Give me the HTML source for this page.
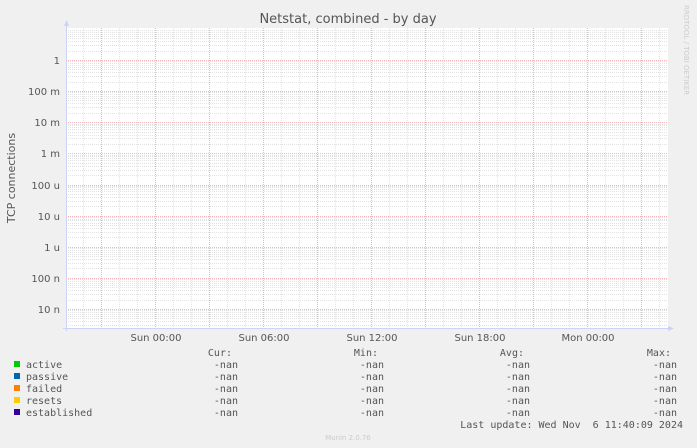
<!DOCTYPE html>
<html><head><meta charset="utf-8"><style>
html,body{margin:0;padding:0;background:#f0f0f0;}
body{width:697px;height:448px;overflow:hidden;position:relative;}
svg{position:absolute;left:0;top:0;}
</style></head><body>
<svg width="697" height="448" xmlns="http://www.w3.org/2000/svg" shape-rendering="crispEdges">
<rect x="66" y="28" width="602" height="300" fill="#fff"/>
<g stroke="#e2e2e2" stroke-dasharray="1,1" fill="none">
<path d="M66 30.5H668M66 32.5H668M66 34.5H668M66 36.5H668M66 38.5H668M66 41.5H668M66 45.5H668M66 51.5H668
M66 61.5H668M66 63.5H668M66 65.5H668M66 67.5H668M66 69.5H668M66 72.5H668M66 76.5H668M66 82.5H668
M66 92.5H668M66 94.5H668M66 96.5H668M66 98.5H668M66 100.5H668M66 103.5H668M66 107.5H668M66 113.5H668
M66 124.5H668M66 125.5H668M66 127.5H668M66 129.5H668M66 132.5H668M66 135.5H668M66 138.5H668M66 144.5H668
M66 155.5H668M66 156.5H668M66 158.5H668M66 160.5H668M66 163.5H668M66 166.5H668M66 170.5H668M66 175.5H668
M66 186.5H668M66 187.5H668M66 189.5H668M66 191.5H668M66 194.5H668M66 197.5H668M66 201.5H668M66 206.5H668
M66 217.5H668M66 219.5H668M66 220.5H668M66 223.5H668M66 225.5H668M66 228.5H668M66 232.5H668M66 237.5H668
M66 248.5H668M66 250.5H668M66 252.5H668M66 254.5H668M66 256.5H668M66 259.5H668M66 263.5H668M66 268.5H668
M66 279.5H668M66 281.5H668M66 283.5H668M66 285.5H668M66 287.5H668M66 290.5H668M66 294.5H668M66 300.5H668
M66 310.5H668M66 312.5H668M66 314.5H668M66 316.5H668M66 318.5H668M66 321.5H668M66 325.5H668"/>
<path d="M83.5 28V328M119.5 28V328M137.5 28V328M173.5 28V328M191.5 28V328M227.5 28V328M245.5 28V328M281.5 28V328M299.5 28V328M335.5 28V328M353.5 28V328M389.5 28V328M407.5 28V328M443.5 28V328M461.5 28V328M497.5 28V328M515.5 28V328M551.5 28V328M569.5 28V328M605.5 28V328M623.5 28V328M659.5 28V328"/>
</g>
<g stroke="#f0b8b8" stroke-dasharray="1,1" fill="none">
<path d="M66 60.5H668M66 91.5H668M66 122.5H668M66 153.5H668M66 185.5H668M66 216.5H668M66 247.5H668M66 278.5H668M66 309.5H668"/>
<path d="M101.5 28V328M155.5 28V328M209.5 28V328M263.5 28V328M317.5 28V328M371.5 28V328M425.5 28V328M479.5 28V328M533.5 28V328M587.5 28V328M641.5 28V328"/>
</g>
<line x1="66.5" y1="24" x2="66.5" y2="331" stroke="#ccd3f5"/>
<line x1="63" y1="328.5" x2="671" y2="328.5" stroke="#ccd3f5"/>
<polygon points="64,26 69,26 66.5,20" fill="#ccd3f5" shape-rendering="auto"/>
<polygon points="668,326 668,331 674,328.5" fill="#ccd3f5" shape-rendering="auto"/>
<g font-family="DejaVu Sans, Liberation Sans, sans-serif" font-size="10" fill="#555" shape-rendering="auto">
<text x="348" y="23" text-anchor="middle" font-size="13">Netstat, combined - by day</text>
<g text-anchor="end">
<text x="60" y="64">1</text>
<text x="60" y="95">100 m</text>
<text x="60" y="126">10 m</text>
<text x="60" y="157">1 m</text>
<text x="60" y="189">100 u</text>
<text x="60" y="220">10 u</text>
<text x="60" y="251">1 u</text>
<text x="60" y="282">100 n</text>
<text x="60" y="313">10 n</text>
</g>
<g text-anchor="middle">
<text x="156" y="341">Sun 00:00</text>
<text x="264" y="341">Sun 06:00</text>
<text x="372" y="341">Sun 12:00</text>
<text x="480" y="341">Sun 18:00</text>
<text x="588" y="341">Mon 00:00</text>
</g>
<text transform="translate(15,178) rotate(-90)" text-anchor="middle" font-size="11">TCP connections</text>
<text transform="translate(684,5) rotate(90)" font-size="7" fill="#ccc">RRDTOOL / TOBI OETIKER</text>
<text x="348" y="440" text-anchor="middle" font-size="7" fill="#ccc">Munin 2.0.76</text>
</g>
<g font-family="DejaVu Sans Mono, Liberation Mono, monospace" font-size="10" fill="#555" shape-rendering="auto">
<rect x="14" y="361" width="6" height="6" fill="#00cc00"/>
<rect x="14" y="373" width="6" height="6" fill="#0066b3"/>
<rect x="14" y="385" width="6" height="6" fill="#ff8000"/>
<rect x="14" y="397" width="6" height="6" fill="#ffcc00"/>
<rect x="14" y="409" width="6" height="6" fill="#330099"/>
<text x="26" y="368">active</text>
<text x="26" y="380">passive</text>
<text x="26" y="392">failed</text>
<text x="26" y="404">resets</text>
<text x="26" y="416">established</text>
<g text-anchor="end">
<text x="232" y="356">Cur:</text>
<text x="378" y="356">Min:</text>
<text x="524" y="356">Avg:</text>
<text x="671" y="356">Max:</text>
<text x="238" y="368">-nan</text><text x="384" y="368">-nan</text><text x="530" y="368">-nan</text><text x="677" y="368">-nan</text>
<text x="238" y="380">-nan</text><text x="384" y="380">-nan</text><text x="530" y="380">-nan</text><text x="677" y="380">-nan</text>
<text x="238" y="392">-nan</text><text x="384" y="392">-nan</text><text x="530" y="392">-nan</text><text x="677" y="392">-nan</text>
<text x="238" y="404">-nan</text><text x="384" y="404">-nan</text><text x="530" y="404">-nan</text><text x="677" y="404">-nan</text>
<text x="238" y="416">-nan</text><text x="384" y="416">-nan</text><text x="530" y="416">-nan</text><text x="677" y="416">-nan</text>
<text x="683" y="428" xml:space="preserve">Last update: Wed Nov  6 11:40:09 2024</text>
</g>
</g>
</svg>
</body></html>
